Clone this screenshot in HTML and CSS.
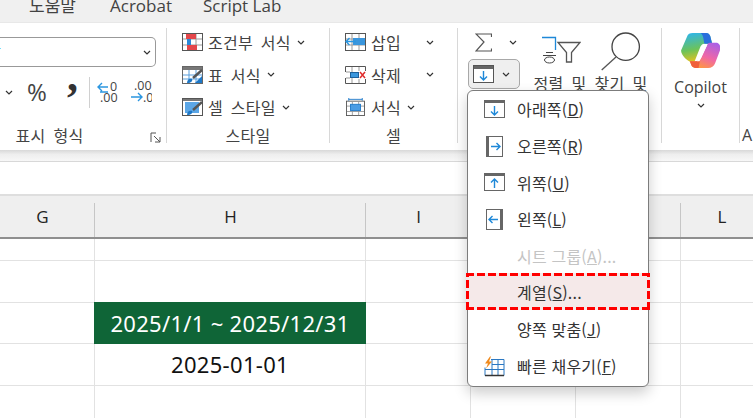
FILE: index.html
```html
<!DOCTYPE html>
<html lang="ko">
<head>
<meta charset="utf-8">
<title>Excel</title>
<link rel="stylesheet" href="styles.css">
</head>
<body>
<div class="app">
  <nav class="tabs">
    <span class="tab tab-help">도움말</span>
    <span class="tab tab-acro">Acrobat</span>
    <span class="tab">Script Lab</span>
  </nav>

  <section class="ribbon">
    <div class="group g-num">
      <div class="num-select"><span class="num-val">날</span><svg class="chev" viewBox="0 0 8 5"><path d="M1 1l3 3 3-3"/></svg></div>
      <div class="num-row">
        <svg class="chev small-chev" viewBox="0 0 8 5"><path d="M1 1l3 3 3-3"/></svg>
        <span class="pct">%</span>
        <span class="comma">,</span>
        <span class="vsep"></span>
        <svg class="dec" viewBox="0 0 22 22"><path class="blue" d="M11 6H1M5 2L1 6l4 4M3 11h8"/><text x="13" y="10">0</text><text x="3" y="21">.00</text></svg>
        <svg class="dec" viewBox="0 0 22 22"><text x="4" y="9">.00</text><path class="blue" d="M1 16h11M8 12l4 4-4 4"/><text x="13" y="21">.0</text></svg>
      </div>
      <div class="g-label g-label-num">표시 형식</div>
      <svg class="launch" viewBox="0 0 11 11"><path d="M1 1h5M1 1v9M10 10L4 4M10 5v5H5"/></svg>
    </div>

    <div class="group g-style">
      <div class="cmds">
        <div class="cmd"><svg class="ic" viewBox="0 0 21 18"><rect x=".5" y=".5" width="20" height="17" fill="#fff" stroke="#555"/><path d="M7 1v16M14 1v16M1 6h19M1 12h19" stroke="#999"/><rect x="4" y="1" width="10" height="5" fill="#e4474b"/><rect x="5" y="6" width="4" height="6" fill="#2b88d8"/><rect x="5" y="12" width="10" height="5" fill="#e4474b"/></svg><span class="cmd-t">조건부 서식</span><svg class="chev" viewBox="0 0 8 5"><path d="M1 1l3 3 3-3"/></svg></div>
        <div class="cmd"><svg class="ic" viewBox="0 0 21 18"><rect x=".5" y=".5" width="20" height="17" fill="#fff" stroke="#666"/><rect x="1" y="1" width="19" height="3" fill="#777"/><path d="M7 4v13M14 4v13M1 9h19M1 13h19" stroke="#5a9fdc"/><path d="M13 17l7-7v7z" fill="#1d78c8"/><path d="M20 4L11 12" stroke="#555" stroke-width="2.500"/><path d="M5 17c0-4 3-5 5-4 1 2-1 4-5 4z" fill="#1d78c8"/></svg><span class="cmd-t">표 서식</span><svg class="chev" viewBox="0 0 8 5"><path d="M1 1l3 3 3-3"/></svg></div>
        <div class="cmd"><svg class="ic" viewBox="0 0 21 18"><rect x=".5" y=".5" width="20" height="17" fill="#fff" stroke="#555"/><rect x="1" y="1" width="19" height="2" fill="#777"/><rect x="3" y="4" width="14" height="11" fill="#5ba6e6"/><path d="M20 4L11 12" stroke="#555" stroke-width="2.500"/><path d="M5 17c0-4 3-5 5-4 1 2-1 4-5 4z" fill="#1d78c8"/></svg><span class="cmd-t">셀 스타일</span><svg class="chev" viewBox="0 0 8 5"><path d="M1 1l3 3 3-3"/></svg></div>
      </div>
      <div class="g-label">스타일</div>
    </div>

    <div class="group g-cell">
      <div class="cmds">
        <div class="cmd"><svg class="ic" viewBox="0 0 21 18"><rect x=".5" y=".5" width="20" height="17" fill="#fff" stroke="#555"/><path d="M7 1v16M14 1v16M1 6h19M1 12h19" stroke="#999"/><rect x="8" y="5" width="12" height="7" fill="#3a96dd"/><path d="M11 8.500H1M4.500 5L1 8.500 4.500 12" stroke="#2b96e0" stroke-width="1.400" fill="none"/></svg><span class="cmd-t wide">삽입</span><svg class="chev" viewBox="0 0 8 5"><path d="M1 1l3 3 3-3"/></svg></div>
        <div class="cmd"><svg class="ic" viewBox="0 0 21 18"><path d="M.5 6V.5h20V5M.5 12v5.500h20V13" fill="none" stroke="#555"/><path d="M7 1v5M14 1v4M7 12v5M14 13v4M1 6h4M1 12h4" stroke="#999"/><rect x="5.500" y="6.500" width="8" height="5" fill="#3a96dd" stroke="#1d5f99"/><path d="M15 6l5 6M20 6l-5 6" stroke="#e02b2b" stroke-width="1.500"/></svg><span class="cmd-t wide">삭제</span><svg class="chev" viewBox="0 0 8 5"><path d="M1 1l3 3 3-3"/></svg></div>
        <div class="cmd"><svg class="ic" viewBox="0 0 21 20"><rect x=".5" y="3.500" width="20" height="16" fill="#fff" stroke="#555"/><path d="M7 4v15M14 4v15M1 9h19M1 15h19" stroke="#999"/><rect x="5" y="7" width="11" height="7" fill="#4a9ce4" stroke="#1d78c8"/><path d="M3 1.500h15M3 0v3M18 0v3" stroke="#1d78c8"/></svg><span class="cmd-t">서식</span><svg class="chev" viewBox="0 0 8 5"><path d="M1 1l3 3 3-3"/></svg></div>
      </div>
      <div class="g-label">셀</div>
    </div>

    <div class="group g-edit">
      <div class="edit-top">
        <div class="edit-col">
          <div class="sum-row"><svg class="sigma" viewBox="0 0 17 19"><path d="M16.500 4V1H1l8 8-8 9h15.500v-2.500" fill="none" stroke="#555" stroke-width="1.200"/></svg><svg class="chev" viewBox="0 0 8 5"><path d="M1 1l3 3 3-3"/></svg></div>
          <div class="fill-btn"><svg class="ic-fill" viewBox="0 0 21 18"><rect x=".5" y=".5" width="20" height="17" fill="#fff" stroke="#555"/><rect x="1" y="1" width="19" height="3" fill="#666"/><path d="M10.500 6v9M7 11.500l3.500 3.500 3.500-3.500" stroke="#1e88d8" stroke-width="1.400" fill="none"/></svg><svg class="chev" viewBox="0 0 8 5"><path d="M1 1l3 3 3-3"/></svg></div>
        </div>
        <div class="big-btn b-sort">
          <svg class="ic-big" viewBox="0 0 42 32"><path d="M3 1.500h13.500V14" fill="none" stroke="#1e88d8" stroke-width="1.300"/><path d="M7 16.500h7M4 19.500h13" stroke="#444" fill="none"/><ellipse cx="10.500" cy="24" rx="5" ry="3" fill="none" stroke="#444"/><path d="M19 6.500h22l-8.500 10V26h-5V16.500z" fill="#fff" stroke="#555" stroke-width="1.300"/></svg>
          <span class="big-t">정렬 및</span>
        </div>
        <div class="big-btn b-find">
          <svg class="ic-big ic-find" viewBox="0 0 42 40"><circle cx="25.700" cy="14.700" r="13.700" fill="none" stroke="#444" stroke-width="1.300"/><path d="M16 25L1.700 38" stroke="#555" stroke-width="1.300"/></svg>
          <span class="big-t">찾기 및</span>
        </div>
      </div>
    </div>

    <div class="group g-copilot">
      <svg class="ic-copilot" viewBox="0 0 40 36">
        <defs>
          <linearGradient id="cpa" x1=".3" y1="0" x2=".5" y2="1"><stop offset="0" stop-color="#2fb5e8"/><stop offset=".55" stop-color="#6cc35a"/><stop offset="1" stop-color="#f2c21a"/></linearGradient>
          <linearGradient id="cpb" x1=".8" y1="0" x2=".3" y2="1"><stop offset="0" stop-color="#a960e6"/><stop offset=".55" stop-color="#f067a6"/><stop offset="1" stop-color="#ff9a3d"/></linearGradient>
        </defs>
        <path d="M12 0h14c2 0 3 1 4 3l2 8h-8c-2 0-3 1-4 3l-6 15c-1 2-3 2-4 1-4-2-10-7-10-12L6 4c1-3 3-4 6-4z" fill="url(#cpa)"/>
        <path d="M20 0h6c2 0 3 1 4 3l2 8h-8c-1-5-1-9-4-11z" fill="#2a6fdc"/>
        <path d="M28 36H15c-2 0-3-1-4-2l-2-5h6c3 0 5-1 6-4l6-13c1-2 2-2 4-2h6c3 1 4 4 3 8l-5 13c-1 3-4 5-7 5z" fill="url(#cpb)"/>
        <path d="M9 29h6c2 0 4-1 5-3l-2 10h-3c-2 0-3-1-4-2z" fill="#f0603a"/>
        <path d="M24 12h3l-8 17h-3c2-1 3-3 4-5z" fill="#fff"/>
      </svg>
      <span class="cp-t">Copilot</span>
      <svg class="chev" viewBox="0 0 8 5"><path d="M1 1l3 3 3-3"/></svg>
    </div>
    <div class="group g-last"><div class="g-label">A</div></div>
  </section>

  <div class="ribbon-shadow"></div>
  <div class="formula"></div>

  <main class="sheet">
    <div class="h">G</div><div class="h">H</div><div class="h">I</div><div class="h"></div><div class="h"></div><div class="h h-last">L</div>
    <div></div><div></div><div></div><div></div><div></div><div></div>
    <div></div><div></div><div></div><div></div><div></div><div></div>
    <div></div><div class="title">2025/1/1 ~ 2025/12/31</div><div></div><div></div><div></div><div></div>
    <div></div><div class="date">2025-01-01</div><div></div><div></div><div></div><div></div>
    <div></div><div></div><div></div><div></div><div></div><div></div>
  </main>

  <ul class="menu">
    <li class="mi"><svg class="mi-ic" viewBox="0 0 21 21"><g transform="translate(0 1)"><rect x=".5" y=".5" width="20" height="17" fill="#fff" stroke="#666"/><rect x="1" y="1" width="19" height="2" fill="#666"/><path d="M10.500 6v9M7 11.500l3.500 3.500 3.500-3.500" stroke="#1e88d8" stroke-width="1.400" fill="none"/></g></svg><span>아래쪽(<u>D</u>)</span></li>
    <li class="mi"><svg class="mi-ic" viewBox="0 0 21 21"><rect x="2.500" y=".5" width="16" height="20" fill="#fff" stroke="#666"/><rect x="3" y="1" width="2" height="19" fill="#666"/><path d="M7 10.500h9M12.500 7l3.500 3.500-3.500 3.500" stroke="#1e88d8" stroke-width="1.400" fill="none"/></svg><span>오른쪽(<u>R</u>)</span></li>
    <li class="mi"><svg class="mi-ic" viewBox="0 0 21 21"><g transform="translate(0 1)"><rect x=".5" y=".5" width="20" height="17" fill="#fff" stroke="#666"/><rect x="1" y="1" width="19" height="2" fill="#666"/><path d="M10.500 15V6M7 9.500L10.500 6 14 9.500" stroke="#1e88d8" stroke-width="1.400" fill="none"/></g></svg><span>위쪽(<u>U</u>)</span></li>
    <li class="mi"><svg class="mi-ic" viewBox="0 0 21 21"><rect x="2.500" y=".5" width="16" height="20" fill="#fff" stroke="#666"/><rect x="16" y="1" width="2" height="19" fill="#666"/><path d="M14 10.500H5M8.500 7L5 10.500 8.500 14" stroke="#1e88d8" stroke-width="1.400" fill="none"/></svg><span>왼쪽(<u>L</u>)</span></li>
    <li class="mi disabled"><span class="mi-ic"></span><span>시트 그룹(<u>A</u>)...</span></li>
    <li class="mi selected"><span class="mi-ic"></span><span>계열(<u>S</u>)...</span></li>
    <li class="mi"><span class="mi-ic"></span><span>양쪽 맞춤(<u>J</u>)</span></li>
    <li class="mi"><svg class="mi-ic" viewBox="0 0 21 20"><path d="M7 3h13v16H1v-8" fill="#fff" stroke="#2b78c2"/><path d="M8 3v16M14 3v16M1 13h19M8 8h12" stroke="#2b78c2"/><path d="M1 19h19" stroke="#333" stroke-width="1.500"/><path d="M6 0L1 7h3l-2 5 6-7H5l2-5z" fill="#f08a1d"/></svg><span>빠른 채우기(<u>F</u>)</span></li>
  </ul>
</div>
</body>
</html>
```

FILE: styles.css
```css
* { box-sizing: border-box; }
html, body { margin: 0; padding: 0; }
body { width: 753px; height: 418px; overflow: hidden; background: #fff; font-family: "Noto Sans CJK KR", "Noto Sans", sans-serif; color: #333; }
.app { position: relative; width: 753px; height: 418px; overflow: hidden; }

.tabs { height: 22px; background: #f0f0f0; display: flex; align-items: flex-start; padding-left: 29px; font-family: "Open Sans", "Noto Sans CJK KR", sans-serif; font-size: 17px; line-height: 17px; color: #424242; overflow: hidden; }
.tab { display: block; margin-top: -3px; white-space: nowrap; }
.tab-help { width: 81px; }
.tab-acro { width: 93px; }

.ribbon { height: 128px; background: #fff; display: flex; border-top: 1px solid #e8e8e8; padding-top: 5px; }
.ribbon-shadow { height: 11px; background: linear-gradient(#d8d8d8, #eeeeee 40%, #f7f7f7); }
.group { position: relative; display: flex; flex-direction: column; border-right: 1px solid #d8d8d8; height: 115px; }
.g-label { position: absolute; left: 0; right: 0; bottom: -2px; text-align: center; font-size: 16px; line-height: 20px; letter-spacing: .3px; word-spacing: 3px; color: #444; }
.chev { width: 8px; height: 5px; flex: none; }
.chev path { fill: none; stroke: #333; stroke-width: 1.200; }

.g-num { width: 167px; }
.g-label-num { padding-right: 67px; }
.num-select { width: 156px; height: 30px; margin-top: 9px; border: 1px solid #999; border-left: 0; border-radius: 0 5px 5px 0; display: flex; align-items: center; justify-content: flex-end; padding-right: 4px; font-size: 15px; position: relative; overflow: hidden; }
.num-val { position: absolute; left: -13px; top: 3px; color: #2b96e0; line-height: 22px; }
.num-row { display: flex; align-items: center; height: 32px; margin-top: 9px; padding-left: 5px; }
.small-chev { margin-right: 14px; }
.pct { font-family: "Open Sans", sans-serif; font-size: 24px; line-height: 32px; width: 40px; color: #444; }
.comma { font-family: "Liberation Serif", serif; font-size: 44px; font-weight: 700; line-height: 32px; width: 22px; position: relative; top: -15px; color: #333; }
.vsep { width: 1px; height: 31px; background: #d0d0d0; margin-right: 7px; }
.dec { width: 22px; height: 22px; margin-right: 11px; }
.dec text { font-family: "Open Sans", sans-serif; font-size: 12.500px; fill: #444; }
.dec .blue { fill: none; stroke: #2b96e0; stroke-width: 1.400; }
.launch { position: absolute; right: 5px; bottom: 0; width: 11px; height: 11px; }
.launch path { fill: none; stroke: #555; }

.cmds { display: flex; flex-direction: column; gap: 10.500px; padding-top: 3px; }
.cmd { display: flex; align-items: center; height: 22px; font-size: 16px; color: #424242; white-space: nowrap; }
.ic { width: 21px; height: 18px; flex: none; margin-right: 5px; }
.cmd-t { margin-right: 6px; letter-spacing: .3px; word-spacing: 3px; }
.g-style { width: 163px; padding-left: 15px; }
.g-cell { width: 128px; padding-left: 15px; }
.g-cell .cmd-t.wide { width: 49px; }

.g-edit { width: 204px; }
.edit-top { display: flex; }
.edit-col { width: 67px; padding-left: 10px; }
.sum-row { display: flex; align-items: center; height: 24px; margin-top: 2px; padding-left: 7px; }
.sigma { width: 17px; height: 19px; margin-right: 17px; flex: none; }
.fill-btn { width: 52px; height: 30px; margin-top: 5px; background: #efefef; border: 1px solid #a8a8a8; border-radius: 5px; display: flex; align-items: center; padding-left: 4px; gap: 8px; }
.ic-fill { width: 21px; height: 18px; }
.big-btn { display: flex; flex-direction: column; align-items: center; white-space: nowrap; }
.b-sort { width: 70px; }
.b-find { width: 50px; margin-left: 1px; }
.ic-big { width: 42px; height: 32px; margin-top: 8px; flex: none; }
.ic-find { height: 40px; margin-top: 4px; }
.big-t { font-size: 16px; line-height: 20px; letter-spacing: .3px; word-spacing: 3px; color: #424242; margin-top: 5px; }
.b-find .big-t { margin-top: 1px; }

.g-copilot { width: 78px; align-items: center; }
.ic-copilot { width: 39px; height: 35px; margin-top: 5px; flex: none; }
.cp-t { font-family: "Open Sans", sans-serif; font-size: 16px; line-height: 20px; margin-top: 9px; color: #424242; }
.g-copilot .chev { margin-top: 6px; }
.g-last { border: 0; width: 13px; }
.g-last .g-label { text-align: left; padding-left: 2px; font-family: "Open Sans", sans-serif; }

.formula { height: 33px; background: #fff; border-top: 1px solid #d8d8d8; }

.sheet { display: grid; margin-left: -10px; grid-template-columns: 105px 271px 105px 105px 105px 82px; grid-template-rows: 43px 22px 42px 41px 42px 34px; border-top: 2px solid #dedede; background: #fff; }
.sheet > div { border-right: 1px solid #e2e2e2; border-bottom: 1px solid #e2e2e2; }
.sheet > .h { background: linear-gradient(#c6c6c6, #c6c6c6) right bottom / 1px 34px no-repeat, #efefef; border-right: 0; border-bottom: 2px solid #8f8f8f; display: flex; align-items: center; justify-content: center; font-family: "Open Sans", sans-serif; font-size: 17px; color: #222; }
.sheet > .title { margin: -1px 0 0 -1px; background: #0f6537; border: 0; color: #fff; font-family: "Noto Sans", sans-serif; font-size: 22px; line-height: 42px; text-align: center; letter-spacing: .3px; }
.sheet > .date { color: #111; font-family: "Noto Sans", sans-serif; font-size: 22px; line-height: 41px; text-align: center; letter-spacing: .3px; }

.menu { position: absolute; left: 467px; top: 90px; width: 182px; height: 297px; margin: 0; padding: 0; list-style: none; background: #fff; border: 1px solid #7c7c7c; border-radius: 6px; box-shadow: 0 6px 14px rgba(0,0,0,.2); }
.mi { display: flex; align-items: center; height: 36.700px; padding-left: 16px; font-size: 16px; letter-spacing: .2px; color: #333; white-space: nowrap; }
.mi-ic { display: block; width: 21px; height: 21px; margin-right: 12px; flex: none; }
.disabled { color: #c4c4c4; }
.selected {
  height: 37px;
  margin: -1px -2px .700px;
  padding-left: 18px;
  background:
    repeating-linear-gradient(90deg, #f00 0 8px, transparent 8px 11px) left top / 100% 3px no-repeat,
    repeating-linear-gradient(90deg, #f00 0 8px, transparent 8px 11px) left bottom / 100% 3px no-repeat,
    repeating-linear-gradient(0deg, #f00 0 8px, transparent 8px 11px) left top / 3px 100% no-repeat,
    repeating-linear-gradient(0deg, #f00 0 8px, transparent 8px 11px) right top / 3px 100% no-repeat,
    #f5e9e9;
}
```
